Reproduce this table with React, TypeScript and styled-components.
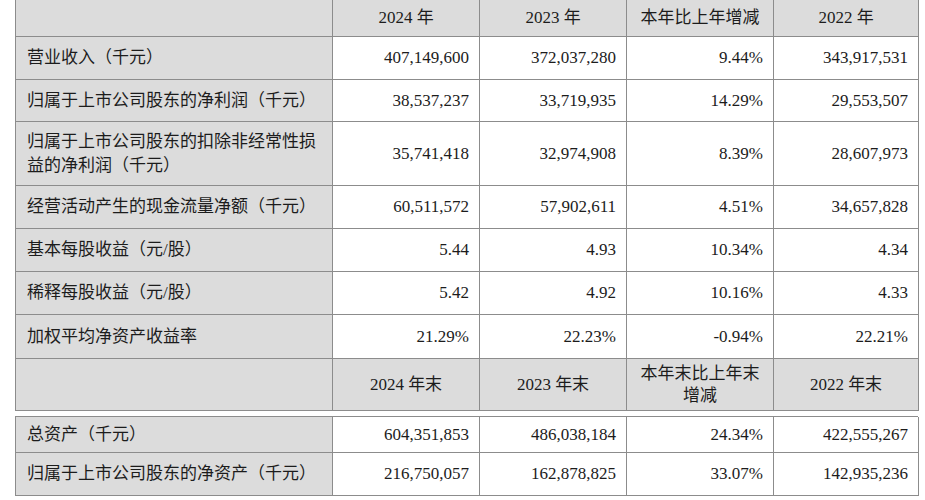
import React from "react";
import styled, { createGlobalStyle } from "styled-components";

const Global = createGlobalStyle`
  html, body { margin: 0; padding: 0; background: #ffffff; }
  body { font-family: "Liberation Serif", "Noto Sans CJK SC", serif; color: #1c1c1c; }
`;

const Page = styled.div`
  width: 925px;
  height: 500px;
  overflow: hidden;
  padding-left: 15px;
  box-sizing: border-box;
  display: flex;
  flex-direction: column;
  gap: 5px;
`;

const Table = styled.div<{ $topBorder?: boolean }>`
  display: grid;
  grid-template-columns: 317px 147px 147px 147px 145px;
  width: 903px;
  box-sizing: border-box;
  border-left: 1px solid #8c8c8c;
  border-top: ${(p) => (p.$topBorder ? "1px solid #8c8c8c" : "none")};
`;

const Cell = styled.div<{ $h: number; $gray?: boolean; $align?: "left" | "right" | "center"; $lh?: number }>`
  box-sizing: border-box;
  height: ${(p) => p.$h}px;
  background: ${(p) => (p.$gray ? "#dcdcdc" : "#ffffff")};
  border-right: 1px solid #8c8c8c;
  border-bottom: 1px solid #8c8c8c;
  display: flex;
  align-items: center;
  justify-content: ${(p) => (p.$align === "right" ? "flex-end" : p.$align === "center" ? "center" : "flex-start")};
  text-align: ${(p) => p.$align || "left"};
  padding: ${(p) => (p.$align === "right" ? "0 10px 0 4px" : p.$align === "center" ? "0 4px" : "0 11px 0 11px")};
  font-size: 17px;
  line-height: ${(p) => p.$lh || 24}px;
  white-space: normal;
`;

type Row = { label: string; values: string[]; h: number };

const rows1: Row[] = [
  { label: "营业收入（千元）", values: ["407,149,600", "372,037,280", "9.44%", "343,917,531"], h: 43 },
  { label: "归属于上市公司股东的净利润（千元）", values: ["38,537,237", "33,719,935", "14.29%", "29,553,507"], h: 42 },
  { label: "归属于上市公司股东的扣除非经常性损益的净利润（千元）", values: ["35,741,418", "32,974,908", "8.39%", "28,607,973"], h: 64 },
  { label: "经营活动产生的现金流量净额（千元）", values: ["60,511,572", "57,902,611", "4.51%", "34,657,828"], h: 43 },
  { label: "基本每股收益（元/股）", values: ["5.44", "4.93", "10.34%", "4.34"], h: 43 },
  { label: "稀释每股收益（元/股）", values: ["5.42", "4.92", "10.16%", "4.33"], h: 43 },
  { label: "加权平均净资产收益率", values: ["21.29%", "22.23%", "-0.94%", "22.21%"], h: 44 },
];

const rows2: Row[] = [
  { label: "总资产（千元）", values: ["604,351,853", "486,038,184", "24.34%", "422,555,267"], h: 36 },
  { label: "归属于上市公司股东的净资产（千元）", values: ["216,750,057", "162,878,825", "33.07%", "142,935,236"], h: 43 },
];

const DataRow = ({ row }: { row: Row }) => (
  <>
    <Cell $h={row.h} $gray>{row.label}</Cell>
    {row.values.map((v, i) => (
      <Cell key={i} $h={row.h} $align="right">{v}</Cell>
    ))}
  </>
);

export default function App() {
  return (
    <>
      <Global />
      <Page>
        <Table>
          <Cell $h={37} $gray />
          <Cell $h={37} $gray $align="center">2024 年</Cell>
          <Cell $h={37} $gray $align="center">2023 年</Cell>
          <Cell $h={37} $gray $align="center">本年比上年增减</Cell>
          <Cell $h={37} $gray $align="center">2022 年</Cell>
          {rows1.map((r) => (
            <DataRow key={r.label} row={r} />
          ))}
          <Cell $h={52} $gray />
          <Cell $h={52} $gray $align="center">2024 年末</Cell>
          <Cell $h={52} $gray $align="center">2023 年末</Cell>
          <Cell $h={52} $gray $align="center" $lh={22}>
            本年末比上年末
            <br />
            增减
          </Cell>
          <Cell $h={52} $gray $align="center">2022 年末</Cell>
        </Table>
        <Table $topBorder>
          {rows2.map((r) => (
            <DataRow key={r.label} row={r} />
          ))}
        </Table>
      </Page>
    </>
  );
}
